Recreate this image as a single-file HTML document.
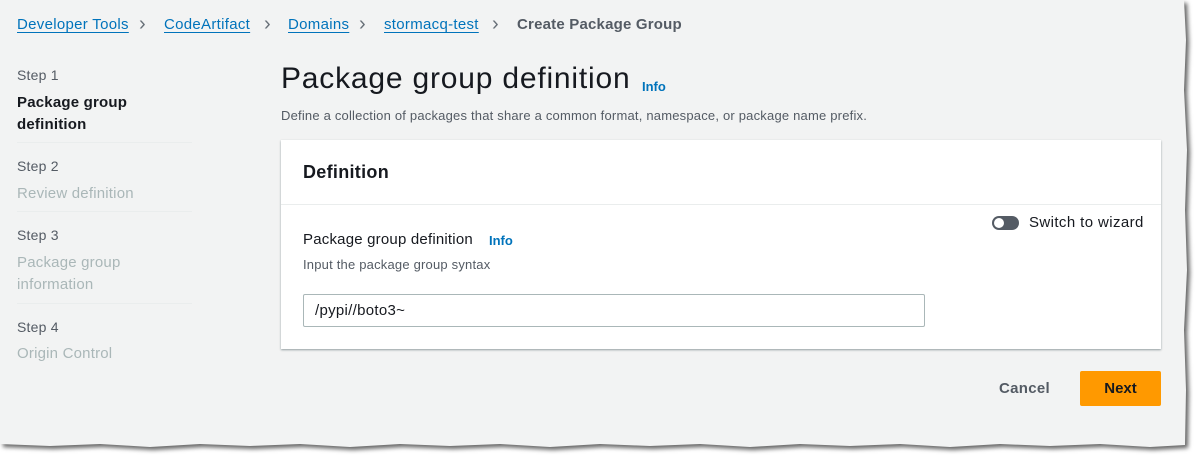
<!DOCTYPE html>
<html><head><meta charset="utf-8"><style>
*{margin:0;padding:0;box-sizing:border-box}
body{width:1198px;height:457px;background:#fff;font-family:"Liberation Sans",sans-serif;position:relative;overflow:hidden}
.paper{position:absolute;left:0;top:0;width:1190px;height:448px;filter:drop-shadow(3px 3px 2px rgba(0,0,0,.6))}
.pg{position:absolute;left:0;top:0;width:1190px;height:448px;background:#f2f3f3;clip-path:polygon(0 0,1184px 0,1186px 40px,1184px 90px,1187px 150px,1185px 210px,1187px 270px,1184px 330px,1186px 390px,1185px 445px,1150px 447px,1100px 444px,1050px 446px,1000px 444px,950px 447px,900px 444px,850px 446px,800px 444px,750px 447px,700px 444px,650px 446px,600px 444px,550px 447px,500px 444px,450px 446px,400px 444px,350px 447px,300px 444px,250px 446px,200px 444px,150px 447px,100px 444px,50px 446px,0 444px)}
.a{position:absolute;white-space:nowrap}
.bc{top:16px;font-size:15px;color:#0073bb;text-decoration:underline;text-underline-offset:3px;letter-spacing:.3px}
.sep{top:13px;font-size:20px;color:#687078}
.step{font-size:14px;color:#545b64;letter-spacing:.2px}
.sl{font-size:15px;color:#aab7b8;line-height:22px;letter-spacing:.2px}
.hr{position:absolute;left:17px;width:175px;height:1px;background:#eaeded}
</style></head><body>
<div class="paper"><div class="pg">
<span class="a bc" style="left:17px">Developer Tools</span>
<span class="a sep" style="left:139px">›</span>
<span class="a bc" style="left:164px">CodeArtifact</span>
<span class="a sep" style="left:264px">›</span>
<span class="a bc" style="left:288px">Domains</span>
<span class="a sep" style="left:359px">›</span>
<span class="a bc" style="left:384px">stormacq-test</span>
<span class="a sep" style="left:492px">›</span>
<span class="a" style="left:517px;top:16px;font-size:15px;color:#545b64;font-weight:bold;letter-spacing:.2px">Create Package Group</span>

<span class="a step" style="left:17px;top:67px">Step 1</span>
<div class="a" style="left:17px;top:92px;font-size:15px;font-weight:bold;color:#16191f;line-height:22px;letter-spacing:.2px">Package group<br>definition</div>
<div class="hr" style="top:142px"></div>
<span class="a step" style="left:17px;top:158px">Step 2</span>
<div class="a sl" style="left:17px;top:183px">Review definition</div>
<div class="hr" style="top:211px"></div>
<span class="a step" style="left:17px;top:227px">Step 3</span>
<div class="a sl" style="left:17px;top:252px">Package group<br>information</div>
<div class="hr" style="top:303px"></div>
<span class="a step" style="left:17px;top:319px">Step 4</span>
<div class="a sl" style="left:17px;top:343px">Origin Control</div>

<span class="a" style="left:281px;top:62px;font-size:30px;color:#16191f;letter-spacing:.8px">Package group definition</span>
<span class="a" style="left:642px;top:79px;font-size:13px;color:#0073bb;font-weight:bold">Info</span>
<span class="a" style="left:281px;top:108px;font-size:13px;color:#545b64;letter-spacing:.2px">Define a collection of packages that share a common format, namespace, or package name prefix.</span>

<div class="a" style="left:281px;top:140px;width:880px;height:209px;background:#fff;box-shadow:0 1px 2px rgba(0,28,36,.4)">
 <div style="height:65px;border-bottom:1px solid #eaeded;padding:22px 0 0 22px;font-size:18px;font-weight:bold;color:#16191f;letter-spacing:.3px">Definition</div>
 <span class="a" style="left:22px;top:91px;font-size:15px;color:#16191f;letter-spacing:.2px">Package group definition</span>
 <span class="a" style="left:208px;top:93px;font-size:13px;color:#0073bb;font-weight:bold">Info</span>
 <span class="a" style="left:22px;top:117px;font-size:13px;color:#545b64;letter-spacing:.2px">Input the package group syntax</span>
 <div class="a" style="left:22px;top:154px;width:622px;height:33px;border:1px solid #aab7b8;border-radius:2px;padding:7px 0 0 11px;font-size:15px;color:#16191f;letter-spacing:.3px">/pypi//boto3~</div>
 <div class="a" style="left:711px;top:76px;width:27px;height:14px;border-radius:7px;background:#545b64"><div style="position:absolute;left:2px;top:2px;width:10px;height:10px;border-radius:50%;background:#fff"></div></div>
 <span class="a" style="left:748px;top:74px;font-size:15px;color:#16191f;letter-spacing:.4px">Switch to wizard</span>
</div>

<span class="a" style="left:999px;top:380px;font-size:15px;font-weight:bold;color:#545b64;letter-spacing:.3px">Cancel</span>
<div class="a" style="left:1080px;top:371px;width:81px;height:35px;background:#ff9900;border-radius:2px;text-align:center;line-height:35px;font-size:15px;font-weight:bold;color:#16191f">Next</div>
</div></div>
</body></html>
